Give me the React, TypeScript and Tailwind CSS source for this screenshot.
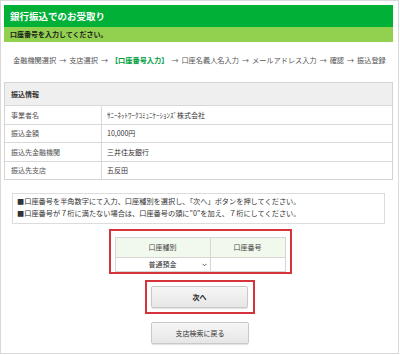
import React from 'react';

const steps = ['金融機関選択', '支店選択', '【口座番号入力】', '口座名義人名入力', 'メールアドレス入力', '確認', '振込登録'];

const infoRows = [
  { label: '事業者名', value: 'ｻﾆｰﾈｯﾄﾜｰｸｺﾐｭﾆｹｰｼｮﾝｽﾞ株式会社' },
  { label: '振込金額', value: '10,000円' },
  { label: '振込先金融機関', value: '三井住友銀行' },
  { label: '振込先支店', value: '五反田' },
];

export default function App() {
  return (
    <div className="h-[355px] w-[400px] bg-white font-['Noto_Sans_CJK_JP',sans-serif] text-[#333]">
      <div className="h-[354px] w-[399px] border border-[#d9d9d9] pl-[3px] pt-[4px]">
        {/* page header */}
        <div className="w-[389px]">
          <div className="flex h-[22px] items-center bg-[#00b037] pl-[6px] text-[9.5px] font-bold text-white">
            銀行振込でのお受取り
          </div>
          <div className="flex h-[15px] items-center bg-[#92d050] pl-[6px] text-[7px] font-bold text-[#1a1a1a]">
            口座番号を入力してください。
          </div>
        </div>

        {/* steps */}
        <div className="mt-[13px] flex h-[10px] items-center whitespace-nowrap pl-[9px] text-[7.2px] leading-[10px] text-[#555]">
          {steps.map((step, i) => (
            <React.Fragment key={step}>
              {i > 0 ? <span className="px-[3px] text-[7px]">→</span> : null}
              <span className={i === 2 ? 'font-bold text-[#00a040]' : ''}>{step}</span>
            </React.Fragment>
          ))}
        </div>

        {/* transfer info */}
        <div className="mt-[17px] w-[389px] border border-[#d4d4d4] text-[7px]">
          <div className="flex h-[22px] items-center bg-[#efefef] pl-[6px] font-bold text-[#333]">振込情報</div>
          {infoRows.map((row) => (
            <div key={row.label} className="flex h-[18.5px] border-t border-[#d9d9d9]">
              <div className="flex w-[97px] items-center border-r border-[#d9d9d9] pl-[6px] text-[#555]">{row.label}</div>
              <div className="flex flex-1 items-center pl-[5px] text-[#333]">{row.value}</div>
            </div>
          ))}
        </div>

        {/* notes */}
        <div className="ml-[8px] mt-[13px] h-[31px] w-[373px] border border-[#dcdcdc] pl-[4px] pt-[1px] text-[7.2px] leading-[12px] text-[#333]">
          <p>■口座番号を半角数字にて入力、口座種別を選択し、「次へ」ボタンを押してください。</p>
          <p>■口座番号が７桁に満たない場合は、口座番号の頭に"0"を加え、７桁にしてください。</p>
        </div>

        <div className="flex w-[392px] flex-col items-center">
          {/* account input */}
          <div className="mt-[5px] h-[45px] w-[183px] border-2 border-[#d6343d] px-[4px] pt-[6px]">
            <div className="w-[171px] border border-[#d6d6d6] text-[7px]">
              <div className="flex h-[19px] bg-[#f1f9ec] text-[#444]">
                <div className="flex w-[95px] items-center justify-center border-r border-[#d6d6d6]">口座種別</div>
                <div className="flex flex-1 items-center justify-center">口座番号</div>
              </div>
              <div className="flex h-[14px] border-t border-[#d6d6d6]">
                <div className="relative flex w-[95px] items-center justify-center border-r border-[#d6d6d6] text-[#333]">
                  普通預金
                  <svg className="absolute right-[3px] top-[5px]" width="5" height="4" viewBox="0 0 5 4">
                    <path d="M0.5 0.8 L2.5 2.8 L4.5 0.8" fill="none" stroke="#555" strokeWidth="0.9" />
                  </svg>
                </div>
                <div className="flex-1" />
              </div>
            </div>
          </div>

          {/* next */}
          <div className="mt-[6px] h-[34px] w-[110px] border-2 border-[#d6343d] pl-[4px] pt-[4px]">
            <button className="flex h-[22px] w-[97px] items-center justify-center rounded-[2px] border border-[#c9c9c9] bg-gradient-to-b from-[#f6f6f6] to-[#e6e6e6] text-[7px] font-bold text-[#222] shadow-[0_1px_1px_rgba(0,0,0,0.12)]">
              次へ
            </button>
          </div>

          <button className="mt-[8px] flex h-[22px] w-[98px] items-center justify-center rounded-[2px] border border-[#c9c9c9] bg-gradient-to-b from-[#f6f6f6] to-[#e6e6e6] text-[7px] text-[#333] shadow-[0_1px_1px_rgba(0,0,0,0.12)]">
            支店検索に戻る
          </button>
        </div>
      </div>
    </div>
  );
}
